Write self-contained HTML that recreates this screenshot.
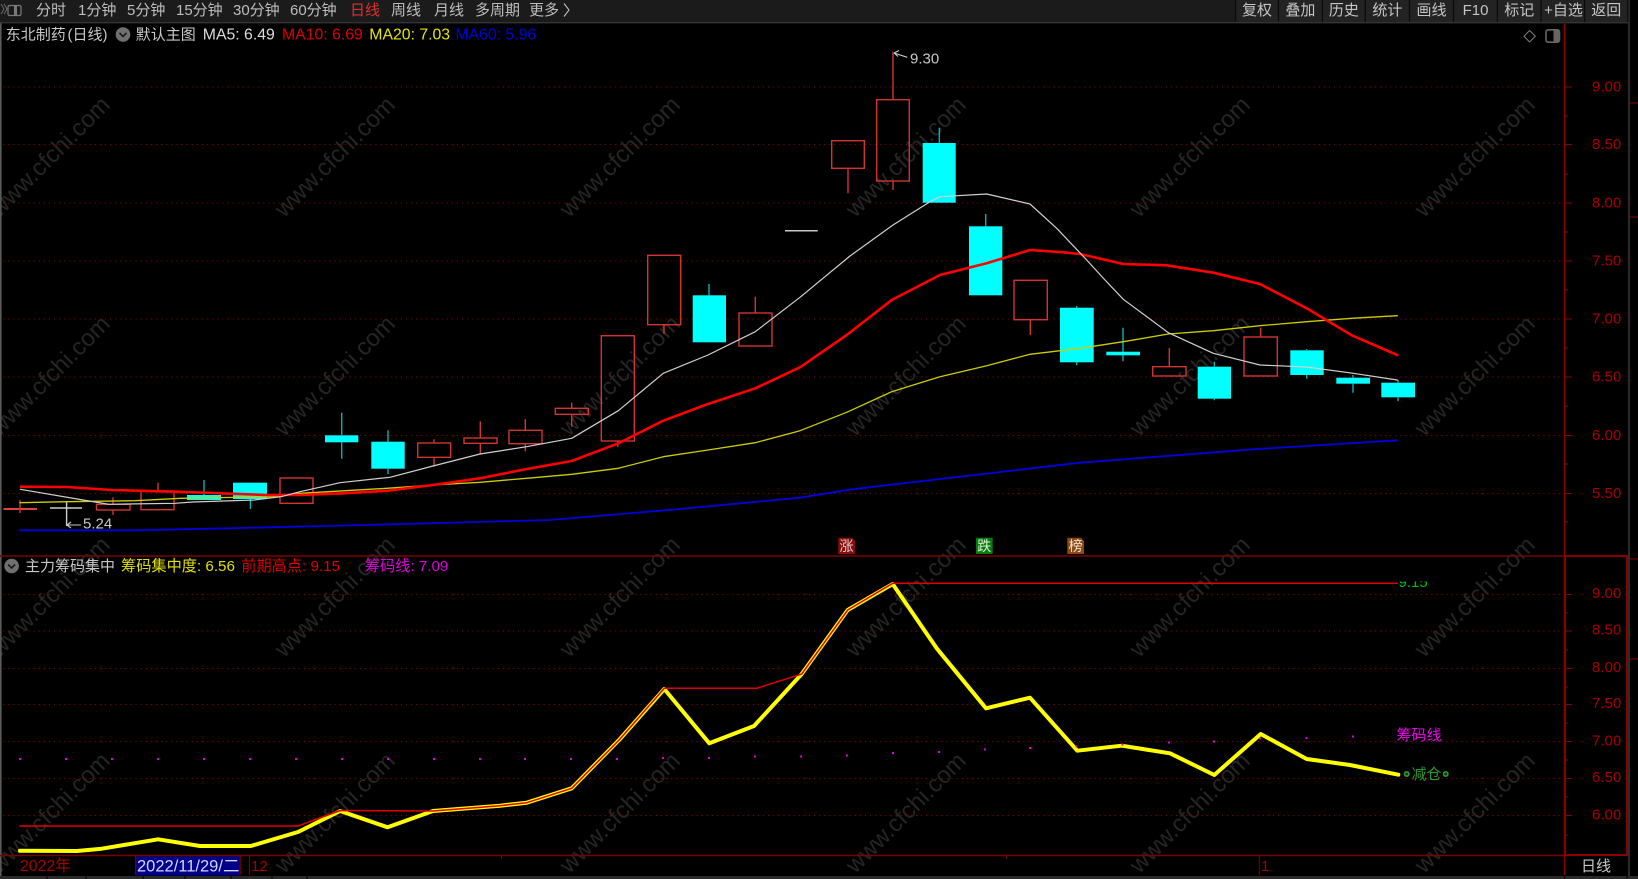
<!DOCTYPE html>
<html lang="zh-CN">
<head>
<meta charset="utf-8">
<title>东北制药 日线</title>
<style>
html,body{margin:0;padding:0;background:#000;width:1638px;height:879px;overflow:hidden}
svg{display:block;position:absolute;left:0;top:0}
text{font-family:"Liberation Sans","Noto Sans CJK SC",sans-serif;font-size:15px;dominant-baseline:central}
.tb{fill:#bdbdbd}
.btn{fill:#c4c4c4;text-anchor:middle}
.ax{fill:#a80000}
.wm{fill:#252525;font-size:24px;text-anchor:middle}
.hd{font-size:15.8px}
.r{fill:none;stroke:#d23434;stroke-width:1.4}
.rw{stroke:#d23434;stroke-width:1.4}
.c{fill:#00ffff}
.cw{stroke:#00b4b4;stroke-width:1.4}
.grid{stroke:#8a0000;stroke-width:1;stroke-dasharray:1.2 3.9;fill:none}
.t{stroke:#8a0000;stroke-width:1}
polyline{fill:none;stroke-linejoin:round;stroke-linecap:round}
</style>
</head>
<body>
<svg width="1638" height="879" viewBox="0 0 1638 879" xmlns="http://www.w3.org/2000/svg">
<rect width="1638" height="879" fill="#000"/>

<!-- watermark -->
<g>
<text class="wm" x="50" y="157" transform="rotate(-45 50 157)">www.cfchi.com</text>
<text class="wm" x="335" y="157" transform="rotate(-45 335 157)">www.cfchi.com</text>
<text class="wm" x="620" y="157" transform="rotate(-45 620 157)">www.cfchi.com</text>
<text class="wm" x="906" y="157" transform="rotate(-45 906 157)">www.cfchi.com</text>
<text class="wm" x="1190" y="157" transform="rotate(-45 1190 157)">www.cfchi.com</text>
<text class="wm" x="1475" y="157" transform="rotate(-45 1475 157)">www.cfchi.com</text>
<text class="wm" x="50" y="376" transform="rotate(-45 50 376)">www.cfchi.com</text>
<text class="wm" x="335" y="376" transform="rotate(-45 335 376)">www.cfchi.com</text>
<text class="wm" x="620" y="376" transform="rotate(-45 620 376)">www.cfchi.com</text>
<text class="wm" x="906" y="376" transform="rotate(-45 906 376)">www.cfchi.com</text>
<text class="wm" x="1190" y="376" transform="rotate(-45 1190 376)">www.cfchi.com</text>
<text class="wm" x="1475" y="376" transform="rotate(-45 1475 376)">www.cfchi.com</text>
<text class="wm" x="50" y="597" transform="rotate(-45 50 597)">www.cfchi.com</text>
<text class="wm" x="335" y="597" transform="rotate(-45 335 597)">www.cfchi.com</text>
<text class="wm" x="620" y="597" transform="rotate(-45 620 597)">www.cfchi.com</text>
<text class="wm" x="906" y="597" transform="rotate(-45 906 597)">www.cfchi.com</text>
<text class="wm" x="1190" y="597" transform="rotate(-45 1190 597)">www.cfchi.com</text>
<text class="wm" x="1475" y="597" transform="rotate(-45 1475 597)">www.cfchi.com</text>
<text class="wm" x="50" y="813" transform="rotate(-45 50 813)">www.cfchi.com</text>
<text class="wm" x="335" y="813" transform="rotate(-45 335 813)">www.cfchi.com</text>
<text class="wm" x="620" y="813" transform="rotate(-45 620 813)">www.cfchi.com</text>
<text class="wm" x="906" y="813" transform="rotate(-45 906 813)">www.cfchi.com</text>
<text class="wm" x="1190" y="813" transform="rotate(-45 1190 813)">www.cfchi.com</text>
<text class="wm" x="1475" y="813" transform="rotate(-45 1475 813)">www.cfchi.com</text>
</g>

<!-- grid lines -->
<g class="grid">
<path d="M3 87H1562M3 144.5H1562M3 203H1562M3 261H1562M3 319H1562M3 377H1562M3 435.5H1562M3 493.5H1562"/>
<path d="M3 594.5H1562M3 631H1562M3 668.5H1562M3 704.5H1562M3 741.5H1562M3 778.5H1562M3 815.5H1562"/>
</g>

<!-- frame -->
<rect x="0" y="22" width="1.6" height="857" fill="#5a5a5a"/>
<rect x="1628" y="0" width="2" height="879" fill="#2b2b2b"/>
<path d="M1564.5 24V875" stroke="#8a0000" stroke-width="1.6"/>
<path d="M0 556H1565M0 855.5H1565" stroke="#7a0000" stroke-width="1.5"/>
<rect x="1565" y="556" width="62" height="299" fill="none" stroke="#8a0000" stroke-width="2"/>
<path d="M1630 103H1638M1630 217H1638M1630 559H1638M1630 659H1638" stroke="#8a0000" stroke-width="1"/>

<!-- axis ticks -->
<g class="t">
<path d="M1565 87H1572M1565 144.5H1572M1565 203H1572M1565 261H1572M1565 319H1572M1565 377H1572M1565 435.5H1572M1565 493.5H1572"/>
<path d="M1565 116H1568M1565 174H1568M1565 232H1568M1565 290H1568M1565 348H1568M1565 406H1568M1565 464H1568M1565 522H1568"/>
<path d="M1565 594.5H1572M1565 631H1572M1565 668.5H1572M1565 704.5H1572M1565 741.5H1572M1565 778.5H1572M1565 815.5H1572"/>
<path d="M1565 613H1568M1565 650H1568M1565 687H1568M1565 723H1568M1565 760H1568M1565 797H1568M1565 835H1568"/>
</g>

<!-- axis labels -->
<g class="ax">
<text x="1592" y="87">9.00</text>
<text x="1592" y="144.5">8.50</text>
<text x="1592" y="203">8.00</text>
<text x="1592" y="261">7.50</text>
<text x="1592" y="319">7.00</text>
<text x="1592" y="377">6.50</text>
<text x="1592" y="435.5">6.00</text>
<text x="1592" y="493.5">5.50</text>
<text x="1592" y="593.5">9.00</text>
<text x="1592" y="630">8.50</text>
<text x="1592" y="667.5">8.00</text>
<text x="1592" y="703.5">7.50</text>
<text x="1592" y="741">7.00</text>
<text x="1592" y="777.5">6.50</text>
<text x="1592" y="815">6.00</text>
</g>

<!-- candles -->
<g>
<path d="M3.5 509H37" stroke="#e04040" stroke-width="2"/>
<path class="rw" d="M20 500V513"/>
<path d="M50 508H82M66.6 502V526" stroke="#cccccc" stroke-width="1.4"/>
<rect class="r" x="96.5" y="504.3" width="33.5" height="5.7"/><path class="rw" d="M113 497.3V504M113 510V515"/>
<rect class="r" x="141" y="491" width="33" height="18.7"/><path class="rw" d="M158 482.7V491"/>
<rect class="c" x="187" y="495" width="34" height="5"/><path class="cw" d="M204 480V495"/>
<rect class="c" x="233" y="482.7" width="34" height="16.3"/><path class="cw" d="M250.4 499V509"/>
<rect class="r" x="280" y="478" width="33" height="25.3"/>
<rect class="c" x="325" y="435.3" width="33.3" height="7"/><path class="cw" d="M341.7 412.7V435M341.7 442V458.7"/>
<rect class="c" x="371.3" y="441.7" width="33.4" height="27"/><path class="cw" d="M388 430.3V442M388 468V474"/>
<rect class="r" x="417.7" y="443" width="33" height="14.3"/><path class="rw" d="M434 439.3V443M434 457.3V466.7"/>
<rect class="r" x="464" y="438" width="33" height="5.3"/><path class="rw" d="M480.3 421.3V438M480.3 443.3V454"/>
<rect class="r" x="509" y="430.3" width="33" height="13.4"/><path class="rw" d="M525.3 419V430.3M525.3 443.7V451.3"/>
<rect class="r" x="555.3" y="408.3" width="33" height="6"/><path class="rw" d="M571.7 402.7V408.3M571.7 414.3V426.7"/>
<rect class="r" x="601.3" y="335.7" width="33" height="105.3"/><path class="rw" d="M617.7 441V446.7"/>
<rect class="r" x="647.7" y="255.3" width="33" height="69.4"/><path class="rw" d="M664 324.7V334"/>
<rect class="c" x="692.7" y="295.3" width="33.3" height="47"/><path class="cw" d="M709 284V295.3"/>
<rect class="r" x="739" y="313" width="33" height="33"/><path class="rw" d="M755.3 296.7V313"/>
<path d="M785 230.7H817.7" stroke="#c8c8c8" stroke-width="1.5"/>
<rect class="r" x="831.7" y="140.7" width="32.6" height="27.6"/><path class="rw" d="M848 168.3V193.3"/>
<rect class="r" x="876.7" y="99.7" width="32.6" height="81.3"/><path class="rw" d="M893 51.7V99.7M893 181V190"/>
<rect class="c" x="922.7" y="143" width="33" height="59.7"/><path class="cw" d="M939.3 127.7V143"/>
<rect class="c" x="969" y="226.3" width="33.3" height="69"/><path class="cw" d="M985.7 214V226.3"/>
<rect class="r" x="1014" y="280.3" width="33.3" height="39.4"/><path class="rw" d="M1030.3 319.7V335"/>
<rect class="c" x="1060" y="307.7" width="33.7" height="54.6"/><path class="cw" d="M1076.7 306V308M1076.7 362V365"/>
<rect class="c" x="1106.3" y="351.7" width="33.7" height="3.6"/><path class="cw" d="M1123 327.7V352M1123 355V361.3"/>
<rect class="r" x="1152.7" y="366.7" width="33.3" height="9.3"/><path class="rw" d="M1169.3 348V366.7"/>
<rect class="c" x="1197.7" y="366.7" width="33.3" height="32"/><path class="cw" d="M1214.3 361.7V367M1214.3 398V400.3"/>
<rect class="r" x="1244" y="337" width="33.3" height="39"/><path class="rw" d="M1260.7 327.7V337"/>
<rect class="c" x="1290.3" y="350.3" width="33.4" height="24.7"/><path class="cw" d="M1306.7 349V351M1306.7 375V378.7"/>
<rect class="c" x="1336.3" y="377.7" width="33.7" height="6"/><path class="cw" d="M1353 375V378M1353 383.7V392.7"/>
<rect class="c" x="1381.3" y="382.7" width="33.7" height="14.6"/><path class="cw" d="M1398 380V383M1398 397V401.3"/>
</g>

<!-- MA lines -->
<polyline stroke="#0000dc" stroke-width="1.8" points="20,530.3 133,530.3 228,528.3 365,525 550,520 676.7,509.3 800,497.7 851.7,489.3 1080,462.7 1253,449.3 1397.3,440.3"/>
<polyline stroke="#cccc00" stroke-width="1.3" points="20,502.7 66.6,501.7 135,500.7 180.6,498.3 273,496.7 300,493.3 386.7,488.3 433,485 480,482.3 526.7,478.3 571.7,474.3 618.3,468.3 663.3,456.7 708,450 755.3,442.7 800,430.7 846.7,412.3 891.7,391.7 940,376.7 986.7,365.7 1030,354.3 1080,348.3 1123.3,341.7 1168.3,334 1213.3,330.7 1260,325.7 1306.7,321.7 1351.7,318.3 1397.3,315.7"/>
<polyline stroke="#ff0000" stroke-width="2.6" points="21,486.7 66.6,487 112,490 175,491.7 221,493.3 266.6,495 300,495 343,493.3 388,490.7 433,485 480,478.3 526.7,469 571.7,461 618.3,443.3 663.3,420.7 708,404 755.3,388.3 800,367.3 846.7,335 891.7,300 940,275 986.7,263.3 1030,250 1063.3,252.3 1080,254 1123.3,264 1166.7,265.3 1213.3,272.7 1260,284 1306.7,308.3 1351.7,335.3 1397.3,355"/>
<polyline stroke="#d0d0d0" stroke-width="1.2" points="20.3,489.3 89,501 109,504.3 175,503.3 193,502 254,500 281,496.7 300,491.7 340,482.7 390,477.3 433,466 480,454 526.7,446.7 571.7,438.3 618.3,410.7 663.3,373.3 708,355 755.3,331.7 800,297.3 850,256 893,225 930,201.7 940,196.7 986.7,194 1030,204 1056.7,228.3 1086.7,260 1105,280 1123.3,299.3 1168.3,332.7 1213.3,353.3 1260,365 1306.7,367 1353.3,373.3 1397.3,380"/>

<!-- high/low labels -->
<path d="M907.3 57.3L894 53M894 53L899 50.5M894 53L898 56.5" stroke="#c8c8c8" stroke-width="1.1" fill="none"/>
<text x="910" y="58.8" fill="#c8c8c8">9.30</text>
<path d="M81 525H67M67 525L71 522M67 525L71 528" stroke="#c8c8c8" stroke-width="1.1" fill="none"/>
<text x="83" y="523.8" fill="#c8c8c8">5.24</text>

<!-- badges -->
<path d="M838.3 537.7H852L855 541V554H838.3Z" fill="#8a0c0c"/>
<text x="839.5" y="545.8" fill="#e0d0d0" style="font-size:14px">涨</text>
<rect x="976" y="537.7" width="16.7" height="16.3" fill="#0a7a0a"/>
<text x="977.3" y="545.8" fill="#e0f0e0" style="font-size:14px">跌</text>
<path d="M1067.3 537.7H1081L1084 541V554H1067.3Z" fill="#8b4a14"/>
<text x="1068.6" y="545.8" fill="#f0e0d0" style="font-size:14px">榜</text>

<!-- lower pane lines -->
<polyline stroke="#ffff00" stroke-width="4" points="20,850.7 77,851 101.7,848.7 158,839.3 200,846 250.8,846 298,832 340.2,811 387.6,827.3 433,811 500,805.7 526.7,802.7 571.7,788.3 620,739 664.3,689 709.3,743.3 754,726 801.7,674 847.7,610 892.7,584 936.7,648.3 986,708.3 1030,697.7 1077.3,750.7 1121.7,745.7 1170,753.3 1214.3,775 1260.7,734 1306.7,759 1350,765 1398.3,774.7"/>
<polyline stroke="#e00000" stroke-width="1.5" points="20,826 298,826 340.2,810.5 433,811 500,805.7 526.7,802.7 571.7,788.3 620,739 664.3,688.3 756.7,688.3 801.7,674 847.7,610 892.7,583.3 1397,583.3"/>

<!-- magenta dots -->
<g fill="#e000e0">
<rect x="19" y="758" width="2" height="2"/><rect x="65" y="758" width="2" height="2"/><rect x="111" y="758" width="2" height="2"/><rect x="157" y="758" width="2" height="2"/><rect x="203" y="758" width="2" height="2"/><rect x="249" y="758" width="2" height="2"/><rect x="295" y="758" width="2" height="2"/><rect x="341" y="758" width="2" height="2"/><rect x="387" y="758" width="2" height="2"/><rect x="433" y="758" width="2" height="2"/><rect x="479" y="758" width="2" height="2"/><rect x="524" y="758" width="2" height="2"/><rect x="570" y="758" width="2" height="2"/><rect x="616" y="758" width="2" height="2"/><rect x="662" y="757" width="2" height="2"/><rect x="708" y="757" width="2" height="2"/><rect x="754" y="755.5" width="2" height="2"/><rect x="800" y="755.5" width="2" height="2"/><rect x="846" y="754.5" width="2" height="2"/><rect x="892" y="752" width="2" height="2"/><rect x="938" y="751" width="2" height="2"/><rect x="984" y="748.5" width="2" height="2"/><rect x="1029" y="747" width="2" height="2"/><rect x="1075.5" y="745.5" width="2" height="2"/><rect x="1121.5" y="743.5" width="2" height="2"/><rect x="1168" y="741.5" width="2" height="2"/><rect x="1213" y="740.5" width="2" height="2"/><rect x="1259" y="737.5" width="2" height="2"/><rect x="1305.5" y="737" width="2" height="2"/><rect x="1352" y="735.5" width="2" height="2"/>
</g>

<!-- lower pane labels -->
<svg x="1390" y="581.5" width="50" height="8" viewBox="1390 581.5 50 8">
<text x="1398.5" y="582.5" fill="#00c000">9.15</text>
</svg>
<text x="1396.5" y="735.5" fill="#f000f0">筹码线</text>
<circle cx="1406.7" cy="774" r="2.2" fill="#0a3a0a" stroke="#2a9a2a" stroke-width="1.6"/>
<text x="1411.5" y="774.5" fill="#2a9a2a">减仓</text>
<circle cx="1445.7" cy="774" r="2.2" fill="#0a3a0a" stroke="#2a9a2a" stroke-width="1.6"/>

<!-- header rows -->
<text x="5.7" y="35" fill="#c8c8c8">东北制药</text>
<text x="67.5" y="35" fill="#c8c8c8">(日线)</text>
<circle cx="123" cy="34.5" r="7.3" fill="#707070"/>
<path d="M119.5 33L123 36.5L126.5 33" fill="none" stroke="#1a1a1a" stroke-width="1.6"/>
<text x="135.8" y="35" fill="#c8c8c8">默认主图</text>
<text class="hd" x="202.8" y="35" fill="#dcdcdc">MA5: 6.49</text>
<text class="hd" x="282" y="35" fill="#e00000">MA10: 6.69</text>
<text class="hd" x="369.3" y="35" fill="#e6e600">MA20: 7.03</text>
<text class="hd" x="455.4" y="35" fill="#0000e0">MA60: 5.96</text>

<circle cx="11.6" cy="566" r="7.3" fill="#707070"/>
<path d="M8.1 564.5L11.6 568L15.1 564.5" fill="none" stroke="#1a1a1a" stroke-width="1.6"/>
<text x="25" y="566.7" fill="#c8c8c8">主力筹码集中</text>
<text x="121" y="566.7" fill="#e0e000" style="font-size:15.2px">筹码集中度: 6.56</text>
<text x="241.3" y="566.7" fill="#e00000" style="font-size:15.2px">前期高点: 9.15</text>
<text x="364.8" y="566.7" fill="#e000e0" style="font-size:15.2px">筹码线: 7.09</text>

<!-- diamond + panel icons -->
<path d="M1529.6 30.5L1535.3 36.3L1529.6 42L1524 36.3Z" fill="none" stroke="#777" stroke-width="1.1"/>
<rect x="1546" y="29.8" width="13.5" height="12.4" rx="2.2" fill="none" stroke="#666" stroke-width="1.6"/>
<rect x="1553.5" y="30.5" width="5.5" height="11" fill="#666"/>

<!-- toolbar -->
<rect x="0" y="0" width="1628" height="22" fill="#1b1b1b"/>
<rect x="0" y="22" width="1628" height="1.4" fill="#343434"/>
<rect x="1235" y="0" width="393" height="22" fill="#232323"/>
<path d="M1235.6 0V22M1278.4 0V22M1322.4 0V22M1365.3 0V22M1409.5 0V22M1453.5 0V22M1497.4 0V22M1541 0V22M1584.6 0V22M1627.8 0V22" stroke="#0c0c0c" stroke-width="1.3"/>
<path d="M1 4L4 9L1 14M4 4L7 9L4 14" fill="none" stroke="#6a6a6a" stroke-width="1"/>
<rect x="8" y="5.5" width="13" height="10" rx="1.5" fill="none" stroke="#7a7a7a" stroke-width="1.2"/>
<rect x="14" y="6" width="3" height="9" fill="#7a7a7a"/>
<g class="tb">
<text x="36" y="10.5">分时</text>
<text x="78" y="10.5">1分钟</text>
<text x="127" y="10.5">5分钟</text>
<text x="176" y="10.5">15分钟</text>
<text x="233" y="10.5">30分钟</text>
<text x="290" y="10.5">60分钟</text>
<text x="350" y="10.5" style="fill:#e03030">日线</text>
<text x="391" y="10.5">周线</text>
<text x="434" y="10.5">月线</text>
<text x="475" y="10.5">多周期</text>
<text x="529" y="10.5">更多</text>
<path d="M564 3.5L569 10L564 16.5" fill="none" stroke="#bdbdbd" stroke-width="1.1"/>
</g>
<g class="btn">
<text x="1257" y="10.5">复权</text>
<text x="1300.4" y="10.5">叠加</text>
<text x="1343.9" y="10.5">历史</text>
<text x="1387.4" y="10.5">统计</text>
<text x="1431.5" y="10.5">画线</text>
<text x="1475.5" y="10.5">F10</text>
<text x="1519.2" y="10.5">标记</text>
<text x="1563.5" y="10.5">+自选</text>
<text x="1606.2" y="10.5">返回</text>
</g>

<!-- time axis -->
<text x="20" y="866.5" fill="#a80000" style="font-size:15.8px">2022年</text>
<rect x="135.7" y="856.5" width="104.5" height="19" fill="#000088"/>
<path d="M135.7 856V875M240.2 856V875M249.4 856V875M1259.3 856V875" stroke="#8a0000" stroke-width="1"/>
<text x="137" y="866.5" fill="#d4d4ff" style="font-size:16.5px">2022/11/29/二</text>
<text x="251" y="866.5" fill="#a80000">12</text>
<text x="1261" y="866.5" fill="#a80000">1</text>
<path d="M501.6 856V859M1006.7 856V859" stroke="#8a0000" stroke-width="1"/>
<text x="1581" y="866.5" fill="#c8c8c8">日线</text>

<!-- status bar -->
<rect x="0" y="876" width="1638" height="3" fill="#2a2a2a"/>
<path d="M47 876V879M86 876V879M143 876V879M185 876V879M231 876V879M272 876V879M307 876V879M1564.5 876V879M1627 876V879" stroke="#050505" stroke-width="1.2"/>
</svg>
</body>
</html>
